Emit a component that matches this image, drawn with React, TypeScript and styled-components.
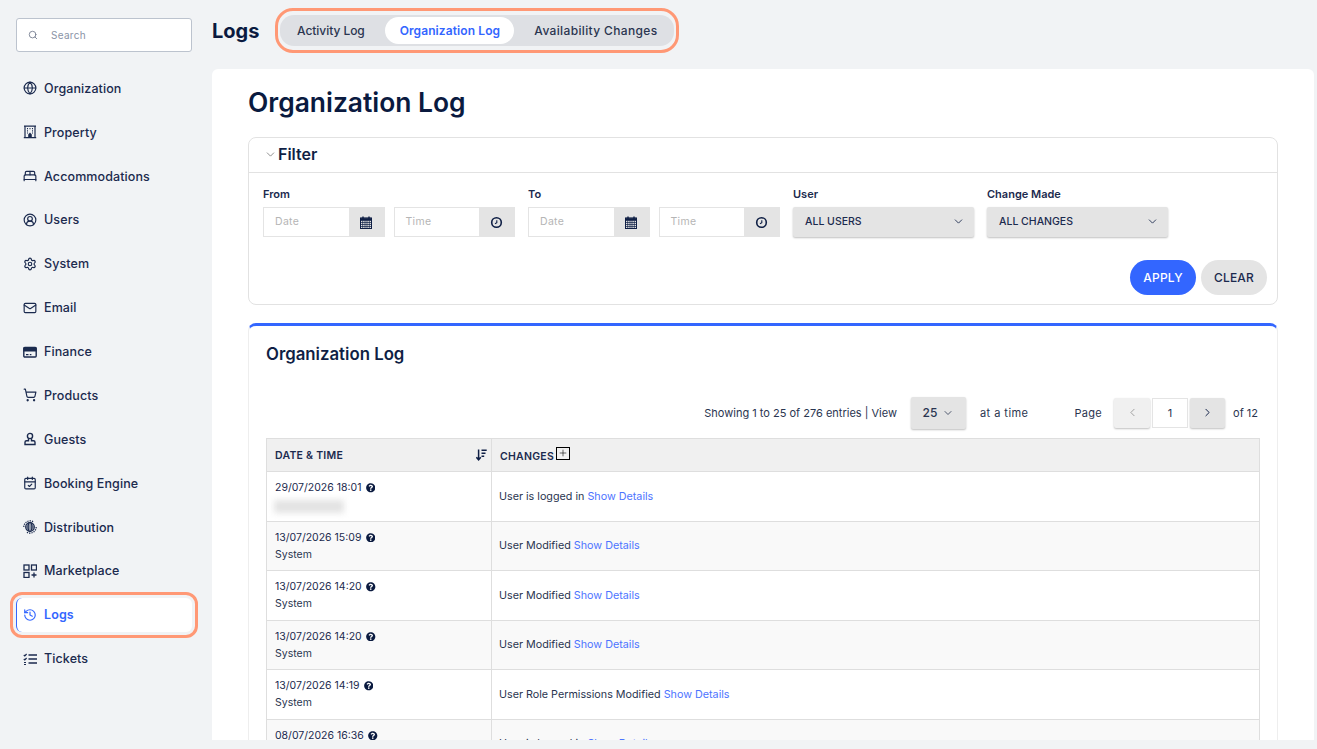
import React from "react";
import styled, { createGlobalStyle } from "styled-components";
import { Search, Globe, BedDouble, CircleUserRound, Settings, Mail, ShoppingCart, CalendarCheck, History, ChevronDown, ChevronLeft, ChevronRight, Plus } from "lucide-react";
import { FaQuestionCircle } from "react-icons/fa";

const ink = "#0f1f45";
const blue = "#3366ff";
const ui = `"Inter", "Liberation Sans", sans-serif`;

const Global = createGlobalStyle`
  html, body { margin: 0; padding: 0; height: 749px; overflow: hidden; background: #f1f3f5; }
  * { box-sizing: border-box; }
  body { font-family: ${ui}; color: ${ink}; }
`;

const Page = styled.div`
  display: flex;
  width: 1317px;
  height: 749px;
  overflow: hidden;
`;
const Sidebar = styled.aside`
  width: 212px;
  flex: none;
  padding: 18px 20px 0 16px;
`;
const SearchBox = styled.div`
  height: 34px;
  display: flex;
  align-items: center;
  gap: 13px;
  padding: 0 0 1px 11px;
  background: #fff;
  border: 1px solid #bcc3ce;
  border-radius: 3px;
  font-size: 10px;
  letter-spacing: 0.3px;
  color: #8a93a6;
  margin-bottom: 19.3px;
`;
const Nav = styled.nav`
  display: flex;
  flex-direction: column;
  gap: 9.88px;
`;
const NavItem = styled.div<{ $active?: boolean }>`
  height: 34px;
  display: flex;
  align-items: center;
  gap: 7px;
  padding-left: 6px;
  font-size: 12.5px;
  font-weight: ${(p) => (p.$active ? 600 : 500)};
  letter-spacing: 0.1px;
  border-radius: 6px;
  color: ${(p) => (p.$active ? blue : "#1b2a4e")};
  background: ${(p) => (p.$active ? "#fff" : "transparent")};
  border-left: 1px solid ${(p) => (p.$active ? blue : "transparent")};
  outline: ${(p) => (p.$active ? "3px solid #ff9875" : "none")};
  outline-offset: 3px;
`;
const IconSlot = styled.span`
  width: 14px;
  height: 14px;
  flex: none;
  display: flex;
  align-items: center;
  justify-content: center;
`;
const Content = styled.main`
  flex: none;
  width: 1102px;
  display: flex;
  flex-direction: column;
  height: 740px;
`;
const TopBar = styled.header`
  height: 69px;
  flex: none;
  display: flex;
  align-items: flex-start;
  padding-top: 8px;
  gap: 16px;
`;
const PageTitle = styled.h1`
  margin: 11px 0 0;
  font-size: 20px;
  line-height: 24px;
  font-weight: 700;
  color: #0a1a3f;
`;
const TabRing = styled.div`
  width: 404px;
  height: 45px;
  padding: 4px 2px;
  border: 3px solid #ff9875;
  border-radius: 18px;
`;
const Tabs = styled.div`
  height: 100%;
  display: flex;
  align-items: center;
  background: #dee0e4;
  border-radius: 14px;
`;
const Tab = styled.div<{ $active?: boolean; $w: number; $track: number; $nudge: number }>`
  width: ${(p) => p.$w}px;
  height: 27px;
  display: flex;
  align-items: center;
  justify-content: center;
  padding-left: ${(p) => Math.max(p.$nudge, 0)}px;
  padding-right: ${(p) => Math.max(-p.$nudge, 0)}px;
  border-radius: 14px;
  font-size: 12px;
  font-weight: ${(p) => (p.$active ? 600 : 500)};
  color: ${(p) => (p.$active ? blue : "#2a3550")};
  background: ${(p) => (p.$active ? "#fff" : "transparent")};
  letter-spacing: ${(p) => p.$track}px;
`;
const Card = styled.section`
  flex: 1;
  min-height: 0;
  overflow: hidden;
  background: #fff;
  border-radius: 6px 6px 0 0;
  padding: 16px 36px 0;
`;
const CardTitle = styled.h2`
  margin: 0 0 17px;
  font-size: 26.4px;
  line-height: 35px;
  font-weight: 600;
  color: #0a1a3f;
`;
const FilterBox = styled.div`
  height: 168px;
  border: 1px solid #e2e2e2;
  border-radius: 8px;
  margin-bottom: 18px;
`;
const FilterHead = styled.div`
  height: 35px;
  display: flex;
  align-items: center;
  gap: 1px;
  padding: 0 0 2px 15px;
  border-bottom: 1px solid #e2e2e2;
  font-size: 16px;
  font-weight: 600;
  color: #0f1f45;
`;
const FilterBody = styled.div`
  padding: 14px 10px 0 14px;
`;
const FilterRow = styled.div`
  display: flex;
  gap: 13px;
`;
const Field = styled.div`
  display: flex;
  flex-direction: column;
  gap: 5px;
`;
const Label = styled.label`
  font-size: 11px;
  line-height: 15px;
  font-weight: 600;
  color: #1b2a4e;
`;
const Pair = styled.div`
  display: flex;
  gap: 9px;
`;
const InputGroup = styled.div`
  width: 121.5px;
  height: 30px;
  display: flex;
`;
const FakeInput = styled.div`
  flex: 1;
  display: flex;
  align-items: center;
  padding: 0 0 1px 11px;
  border: 1px solid #e4e4e4;
  border-right: 0;
  font-size: 10.5px;
  color: #b5b5b5;
  letter-spacing: 0.3px;
`;
const Addon = styled.div`
  width: 36px;
  background: #e4e4e4;
  display: flex;
  align-items: center;
  justify-content: center;
  padding-right: 1px;
  color: ${ink};
`;
const Dropdown = styled.div`
  width: 181px;
  height: 30px;
  display: flex;
  align-items: center;
  justify-content: space-between;
  padding: 0 9px 1px 12px;
  background: #e4e4e4;
  border-radius: 2px;
  box-shadow: 0 1px 2px rgba(0, 0, 0, 0.25);
  font-size: 10.5px;
  font-weight: 500;
  color: #1b2a4e;
`;
const Actions = styled.div`
  display: flex;
  justify-content: flex-end;
  gap: 5px;
  margin-top: 23px;
`;
const Pill = styled.button<{ $primary?: boolean }>`
  height: 35px;
  width: 66px;
  border: 0;
  border-radius: 18px;
  font-family: inherit;
  font-size: 12px;
  font-weight: 500;
  letter-spacing: 0.2px;
  padding: 0;
  color: ${(p) => (p.$primary ? "#fff" : "#1b2a4e")};
  background: ${(p) => (p.$primary ? blue : "#e4e4e4")};
`;
const LogPanel = styled.div`
  border-top: 3px solid ${blue};
  border-radius: 8px 8px 0 0;
  border-left: 1px solid #eee;
  border-right: 1px solid #eee;
  padding: 0 17px;
`;
const PanelTitle = styled.h3`
  margin: 0;
  padding-top: 16px;
  height: 64px;
  font-size: 16.8px;
  line-height: 24px;
  font-weight: 600;
  color: #0f1f45;
`;
const Toolbar = styled.div`
  height: 48px;
  display: flex;
  align-items: center;
  font-size: 11px;
  color: #2a3550;
  padding-bottom: 3px;
`;
const Showing = styled.span`
  margin-left: auto;
`;
const AtATime = styled.span`
  letter-spacing: 0.45px;
`;
const PerPage = styled.div`
  width: 55px;
  height: 32px;
  margin: 0 14px;
  display: flex;
  align-items: center;
  justify-content: center;
  gap: 5px;
  background: #e4e4e4;
  border-radius: 2px;
  box-shadow: 0 1px 2px rgba(0, 0, 0, 0.25);
  font-size: 12px;
  font-weight: 500;
`;
const PageLabel = styled.span`
  margin: 0 12px 0 46px;
  letter-spacing: 0.3px;
`;
const PageBtn = styled.div<{ $off?: boolean }>`
  width: ${(p) => (p.$off ? 36 : 35)}px;
  height: 30px;
  display: flex;
  align-items: center;
  justify-content: center;
  background: ${(p) => (p.$off ? "#f0f0f0" : "#e4e4e4")};
  color: ${(p) => (p.$off ? "#888" : ink)};
  border-radius: 2px;
  box-shadow: 0 1px 2px rgba(0, 0, 0, 0.25);
`;
const PageInput = styled.div`
  width: 36px;
  height: 30px;
  margin: 0 2px;
  display: flex;
  align-items: center;
  justify-content: center;
  border: 1px solid #e4e4e4;
`;
const OfPages = styled.span`
  margin-left: 8px;
  margin-right: 2px;
`;
const Table = styled.table`
  width: 994px;
  border-collapse: collapse;
  table-layout: fixed;
  font-size: 10.5px;
  color: #2a3550;
  th, td { border: 1px solid #dedede; }
`;
const HeadCell = styled.th<{ $low?: boolean }>`
  height: 33px;
  padding: ${(p) => (p.$low ? "4px" : "0")} 8px 0;
  background: #f0f0f0;
  text-align: left;
  font-size: 10.5px;
  font-weight: 600;
  letter-spacing: 0.25px;
  color: #1b2a4e;
  border-bottom: 0 !important;
`;
const HeadInner = styled.div`
  display: flex;
  align-items: center;
  justify-content: space-between;
`;
const PlusBox = styled.span`
  display: inline-flex;
  align-items: center;
  justify-content: center;
  width: 14px;
  height: 13px;
  margin-left: 2px;
  border: 1px solid #000;
  color: #000;
  vertical-align: middle;
  transform: translateY(-4px);
`;
const Row = styled.tr<{ $odd: boolean }>`
  height: 49.5px;
  background: ${(p) => (p.$odd ? "#f9f9f9" : "#fff")};
`;
const DateCell = styled.td`
  padding: 0 8px;
  line-height: 17px;
`;
const ChangeCell = styled.td`
  padding: 0 7px;
  font-size: 10.75px;
`;
const Stamp = styled.div`
  display: flex;
  align-items: center;
  gap: 4.5px;
  color: #1b2a4e;
`;
const Blurred = styled.div`
  width: 70px;
  height: 13px;
  margin: 4px 0 0 -1px;
  background: #e3e3e3;
  filter: blur(3px);
`;
const Link = styled.a`
  color: #4d74ff;
`;

const sv = { width: 14, height: 14, viewBox: "0 0 14 14", fill: "none", stroke: "#1b2a4e", strokeWidth: 1.2 };
const Hotel = () => (
  <svg {...sv}>
    <path d="M1 1.2h12M2 1.2v11.3M12 1.2v11.3M.8 12.6h12.4" />
    <path d="M4 3.6h1M6.5 3.6h1M9 3.6h1M4 5.8h1M9 5.8h1M4 8h1M9 8h1" />
    <path d="M5.2 12.6V9.4L7 7.4l1.8 2v3.2z" fill="#1b2a4e" stroke="none" />
  </svg>
);
const CardFilled = () => (
  <svg {...sv}>
    <rect x=".8" y="2.4" width="12.4" height="9.6" rx="1" strokeWidth="1.4" />
    <path d="M1 3h12v3H1z" fill="#1b2a4e" />
    <path d="M3 9.6h2.5M6.8 9.6h1.6" />
  </svg>
);
const Guest = () => (
  <svg {...sv} strokeWidth={1.4}>
    <circle cx="7" cy="4" r="2.6" />
    <path d="M5.5 6.5v2.2H3.5a1.5 1.5 0 0 0-1.5 1.5v2.3h10v-2.3a1.5 1.5 0 0 0-1.5-1.5H8.5V6.5" />
  </svg>
);
const Dist = () => (
  <svg {...sv} width={16} height={16}>
    <circle cx="7" cy="7" r="4.3" />
    <ellipse cx="7" cy="7" rx="1.9" ry="4.3" />
    <path d="M2.7 7h8.6M3.3 5h7.4M3.3 9h7.4" strokeWidth="0.9" />
    <path d="M.8 7a6.2 6.2 0 0 1 9.5-5.2M13.2 7a6.2 6.2 0 0 1-9.5 5.2" strokeDasharray="1.3 1" />
  </svg>
);
const Market = () => (
  <svg {...sv} strokeWidth={1.3}>
    <rect x="1" y="1" width="5" height="5" />
    <rect x="8.5" y="1" width="5" height="5" />
    <rect x="1" y="8.5" width="5" height="5" />
    <path d="M11 8.5v5M8.5 11h5" />
  </svg>
);
const Checklist = () => (
  <svg {...sv} width={15}>
    <path d="M5.5 3h8.5M5.5 7h8.5M5.5 11h8.5" strokeWidth="1.5" />
    <path d="M.8 3l1 1 1.8-2M.8 7l1 1 1.8-2" />
    <path d="M1 10.5h2M1 12.5h2" />
  </svg>
);
const Clock = () => (
  <svg width="13" height="13" viewBox="0 0 13 13" fill="none" stroke={ink}>
    <circle cx="6.5" cy="6.5" r="4.8" strokeWidth="1.6" />
    <path d="M6.8 4.2v2.6L5 7.8" strokeWidth="1.1" />
  </svg>
);
const GridCalendar = () => (
  <svg width="12" height="13" viewBox="0 0 12 13" fill="none" stroke={ink}>
    <rect x=".5" y="2" width="11" height="10.5" strokeWidth="1" />
    <path d="M.5 2.2h11v2.3H.5z" fill={ink} strokeWidth="0.6" />
    <path d="M3 .4v2.6M9 .4v2.6" strokeWidth="1.4" />
    <path d="M.5 6.5h11M.5 8.5h11M.5 10.5h11M2.7 4.5v8M5 4.5v8M7 4.5v8M9.3 4.5v8" strokeWidth="0.7" />
  </svg>
);
const SortDown = () => (
  <svg width="11" height="12" viewBox="0 0 11 12" fill="none" stroke={ink} strokeWidth="1.5" style={{ marginRight: -4 }}>
    <path d="M2.6 .5v10M.4 8.2l2.2 2.6 2.2-2.6" />
    <path d="M5.5 1.2h5.2M5.5 4.2h4M5.5 7.2h2.7" />
  </svg>
);

const i14 = { size: 14, strokeWidth: 2, color: "#1b2a4e" };
const navItems: [string, React.ReactNode, boolean?][] = [
  ["Organization", <Globe {...i14} />],
  ["Property", <Hotel />],
  ["Accommodations", <BedDouble {...i14} />],
  ["Users", <CircleUserRound {...i14} />],
  ["System", <Settings {...i14} />],
  ["Email", <Mail {...i14} />],
  ["Finance", <CardFilled />],
  ["Products", <ShoppingCart {...i14} />],
  ["Guests", <Guest />],
  ["Booking Engine", <CalendarCheck {...i14} />],
  ["Distribution", <Dist />],
  ["Marketplace", <Market />],
  ["Logs", <History size={14} strokeWidth={2} color={blue} />, true],
  ["Tickets", <Checklist />],
];

const rows: [string, string | null, string][] = [
  ["29/07/2026 18:01", null, "User is logged in"],
  ["13/07/2026 15:09", "System", "User Modified"],
  ["13/07/2026 14:20", "System", "User Modified"],
  ["13/07/2026 14:20", "System", "User Modified"],
  ["13/07/2026 14:19", "System", "User Role Permissions Modified"],
  ["08/07/2026 16:36", "System", "User is logged in"],
];

const DateTime = () => (
  <Pair>
    <InputGroup>
      <FakeInput>Date</FakeInput>
      <Addon><GridCalendar /></Addon>
    </InputGroup>
    <InputGroup>
      <FakeInput>Time</FakeInput>
      <Addon><Clock /></Addon>
    </InputGroup>
  </Pair>
);

export default function App() {
  return (
    <Page>
      <Global />
      <Sidebar>
        <SearchBox>
          <Search size={10} color="#6d7689" />
          Search
        </SearchBox>
        <Nav>
          {navItems.map(([label, icon, active]) => (
            <NavItem key={label} $active={active}>
              <IconSlot>{icon}</IconSlot>
              {label}
            </NavItem>
          ))}
        </Nav>
      </Sidebar>
      <Content>
        <TopBar>
          <PageTitle>Logs</PageTitle>
          <TabRing>
            <Tabs>
              <Tab $w={105} $track={-0.05} $nudge={-4}>Activity Log</Tab>
              <Tab $w={129} $track={0.1} $nudge={0} $active>Organization Log</Tab>
              <Tab $w={160} $track={0.35} $nudge={3}>Availability Changes</Tab>
            </Tabs>
          </TabRing>
        </TopBar>
        <Card>
          <CardTitle>Organization Log</CardTitle>
          <FilterBox>
            <FilterHead>
              <ChevronDown size={13} strokeWidth={1.2} color="#555" />
              Filter
            </FilterHead>
            <FilterBody>
              <FilterRow>
                <Field><Label>From</Label><DateTime /></Field>
                <Field><Label>To</Label><DateTime /></Field>
                <Field>
                  <Label>User</Label>
                  <Dropdown>ALL USERS <ChevronDown size={13} strokeWidth={1.6} /></Dropdown>
                </Field>
                <Field>
                  <Label>Change Made</Label>
                  <Dropdown>ALL CHANGES <ChevronDown size={13} strokeWidth={1.6} /></Dropdown>
                </Field>
              </FilterRow>
              <Actions>
                <Pill $primary>APPLY</Pill>
                <Pill>CLEAR</Pill>
              </Actions>
            </FilterBody>
          </FilterBox>
          <LogPanel>
            <PanelTitle>Organization Log</PanelTitle>
            <Toolbar>
              <Showing>Showing 1 to 25 of 276 entries | View</Showing>
              <PerPage>25 <ChevronDown size={12} strokeWidth={1.6} /></PerPage>
              <AtATime>at a time</AtATime>
              <PageLabel>Page</PageLabel>
              <PageBtn $off><ChevronLeft size={13} strokeWidth={1.4} /></PageBtn>
              <PageInput>1</PageInput>
              <PageBtn><ChevronRight size={13} strokeWidth={1.8} /></PageBtn>
              <OfPages>of 12</OfPages>
            </Toolbar>
            <Table>
              <colgroup>
                <col width={225} />
                <col />
              </colgroup>
              <thead>
                <tr>
                  <HeadCell>
                    <HeadInner>
                      DATE &amp; TIME
                      <SortDown />
                    </HeadInner>
                  </HeadCell>
                  <HeadCell $low>
                    CHANGES
                    <PlusBox><Plus size={10} strokeWidth={1.4} /></PlusBox>
                  </HeadCell>
                </tr>
              </thead>
              <tbody>
                {rows.map(([date, user, change], i) => (
                  <Row key={i} $odd={i % 2 === 1}>
                    <DateCell>
                      <Stamp>
                        {date}
                        <FaQuestionCircle size={9.5} color="#0a1a3f" />
                      </Stamp>
                      {user ? <div>{user}</div> : <Blurred />}
                    </DateCell>
                    <ChangeCell>
                      {change} <Link>Show Details</Link>
                    </ChangeCell>
                  </Row>
                ))}
              </tbody>
            </Table>
          </LogPanel>
        </Card>
      </Content>
    </Page>
  );
}
